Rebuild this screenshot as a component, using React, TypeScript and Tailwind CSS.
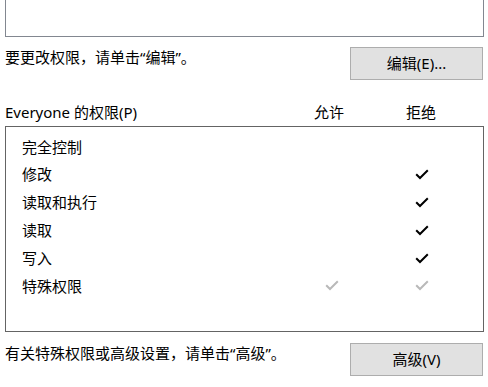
const perms = [
  { name: "完全控制", allow: 0, deny: 0 },
  { name: "修改", allow: 0, deny: 1 },
  { name: "读取和执行", allow: 0, deny: 1 },
  { name: "读取", allow: 0, deny: 1 },
  { name: "写入", allow: 0, deny: 1 },
  { name: "特殊权限", allow: 2, deny: 2 },
];

// 0 = empty, 1 = black, 2 = greyed
const Check = ({ state }: { state: number }) => {
  if (!state) return null;
  return (
    <svg width="14" height="11" viewBox="0 0 14 11">
      <path
        d="M1.2 5.2 L5 9 L12.8 1.2"
        fill="none"
        stroke={state === 1 ? "#000" : "#b9b9b9"}
        strokeWidth="2"
      />
    </svg>
  );
};

const Btn = ({ label }: { label: string }) => (
  <button className="ml-auto mr-[5px] w-[133px] h-[33px] shrink-0 border border-[#adadad] bg-[#e1e1e1] text-[15px] text-black">
    {label}
  </button>
);

export default function App() {
  return (
    <div className="w-[488px] h-[387px] bg-white text-[15px] text-black font-['Noto_Sans','Noto_Sans_CJK_SC',sans-serif] overflow-hidden">
      <div className="ml-[5px] w-[479px] h-[37px] border-x border-b border-[#828790]" />

      <div className="mt-[10px] flex items-start pl-[5px]">
        <span className="leading-[20px]">要更改权限，请单击“编辑”。</span>
        <Btn label="编辑(E)..." />
      </div>

      <div className="mt-[22px] flex leading-[20px] pl-[5px]">
        <span className="w-[309px]">Everyone 的权限(P)</span>
        <span className="w-[92px]">允许</span>
        <span>拒绝</span>
      </div>

      <div className="mt-[4px] ml-[5px] w-[479px] h-[206px] border border-[#646464] pt-[6px]">
        {perms.map((p) => (
          <div key={p.name} className="flex items-center h-[27.8px]">
            <span className="pl-[16px] w-[318px]">{p.name}</span>
            <span className="w-[16px] flex justify-center">
              <Check state={p.allow} />
            </span>
            <span className="ml-[74px] w-[16px] flex justify-center">
              <Check state={p.deny} />
            </span>
          </div>
        ))}
      </div>

      <div className="mt-[11px] flex items-start pl-[5px]">
        <span className="leading-[20px]">有关特殊权限或高级设置，请单击“高级”。</span>
        <Btn label="高级(V)" />
      </div>
    </div>
  );
}
